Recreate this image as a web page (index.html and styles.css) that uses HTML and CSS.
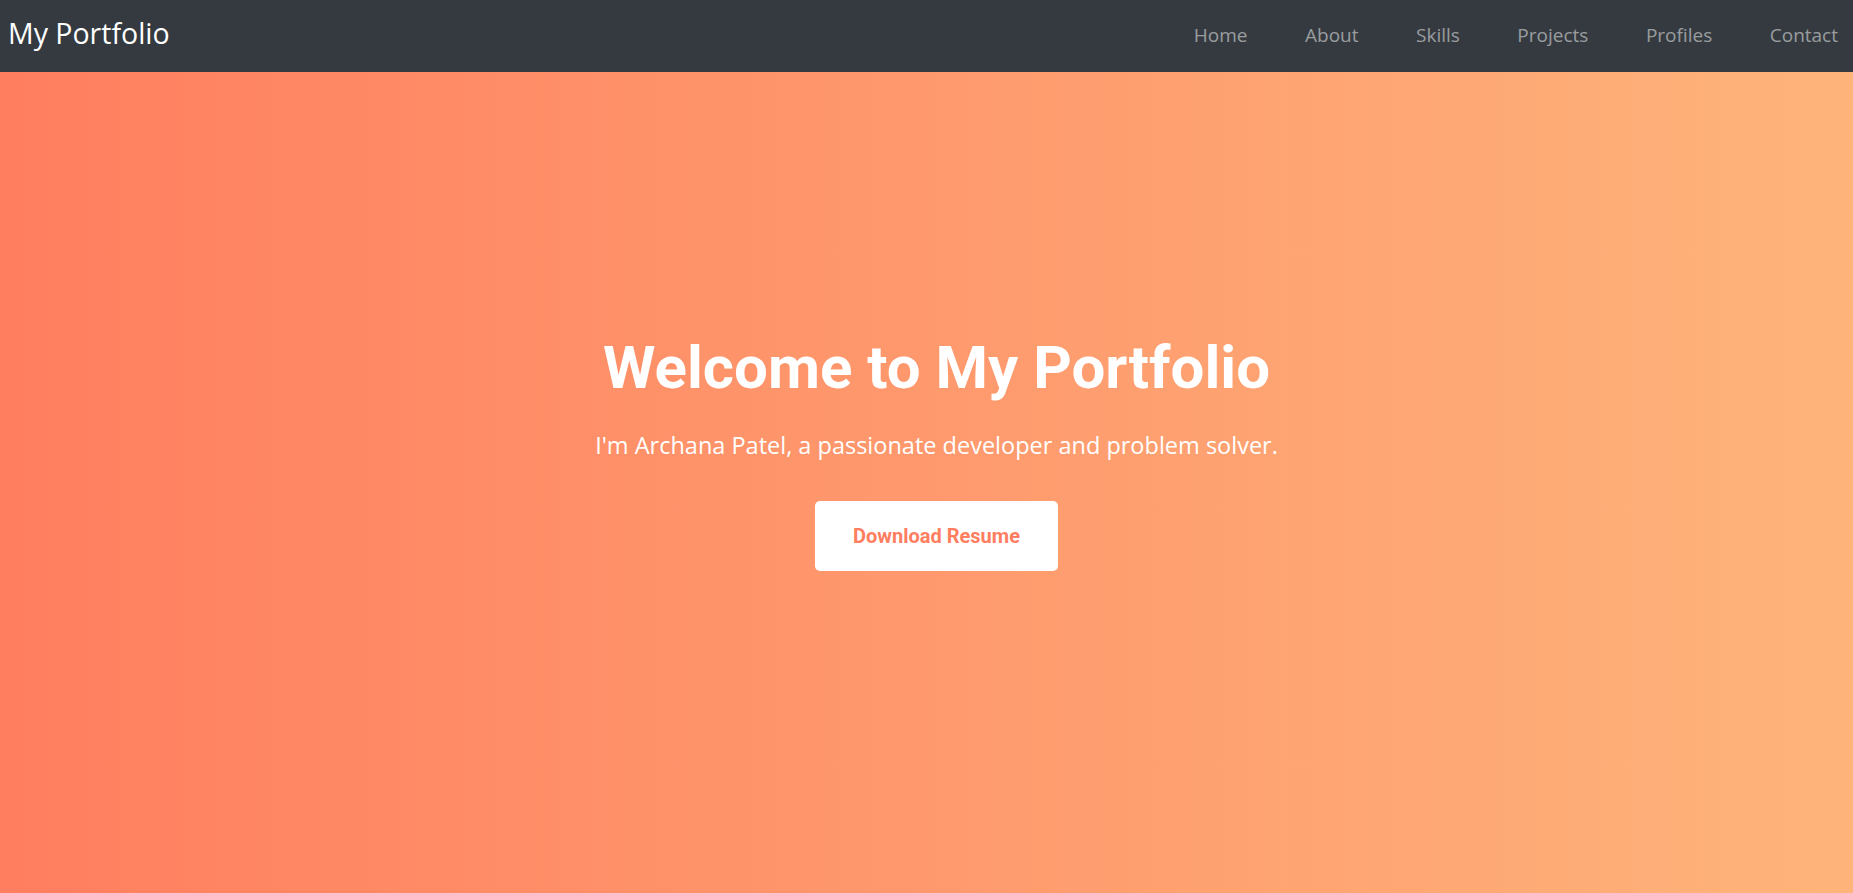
FILE: index.html
```html
<!DOCTYPE html>
<html lang="en">
<head>
<meta charset="utf-8">
<title>My Portfolio</title>
<link rel="stylesheet" href="styles.css">
</head>
<body>
<nav class="navbar">
  <a class="brand" href="#">My Portfolio</a>
  <ul class="nav-links">
    <li><a href="#">Home</a></li>
    <li><a href="#">About</a></li>
    <li><a href="#">Skills</a></li>
    <li><a href="#">Projects</a></li>
    <li><a href="#">Profiles</a></li>
    <li><a href="#">Contact</a></li>
  </ul>
</nav>
<section class="hero">
  <div class="hero-content">
    <h1 class="hero-title">Welcome to My Portfolio</h1>
    <p class="hero-lead">I'm Archana Patel, a passionate developer and problem solver.</p>
    <a class="btn-resume" href="#">Download Resume</a>
  </div>
</section>
</body>
</html>
```

FILE: styles.css
```css
* { box-sizing: border-box; }
html, body { margin: 0; padding: 0; }
body {
  font-family: "Open Sans", "Noto Sans", sans-serif;
  overflow: hidden;
}
a { text-decoration: none; }

.navbar {
  height: 72px;
  background: #343a40;
  display: flex;
  align-items: center;
  justify-content: space-between;
  padding: 0 15px 6px 8px;
}
.brand {
  color: #fff;
  font-size: 28.5px;
  line-height: 1;
}
.nav-links {
  list-style: none;
  margin: 0;
  padding: 5px 0 0;
  display: flex;
  gap: 57.5px;
}
.nav-links a {
  color: rgba(255, 255, 255, 0.5);
  font-size: 19px;
  line-height: 1;
}

.hero {
  height: calc(100vh - 72px);
  background: linear-gradient(to right, #ff7e5f, #feb47b);
  display: flex;
  align-items: center;
  justify-content: center;
  padding: 0 0 62px 20px;
  color: #fff;
  text-align: center;
}
.hero-content {
  display: flex;
  flex-direction: column;
  align-items: center;
}
.hero-title {
  font-family: Roboto, sans-serif;
  font-weight: 700;
  font-size: 60px;
  line-height: 1.2;
  margin: 0 0 24.5px;
}
.hero-lead {
  font-size: 23.5px;
  margin: 0 0 38px;
  line-height: 1.5;
}
.btn-resume {
  display: inline-block;
  background: #fff;
  color: #ff7e5f;
  font-family: Roboto, sans-serif;
  font-weight: 700;
  font-size: 20px;
  line-height: 24px;
  padding: 23px 38px;
  border-radius: 5px;
}
```
